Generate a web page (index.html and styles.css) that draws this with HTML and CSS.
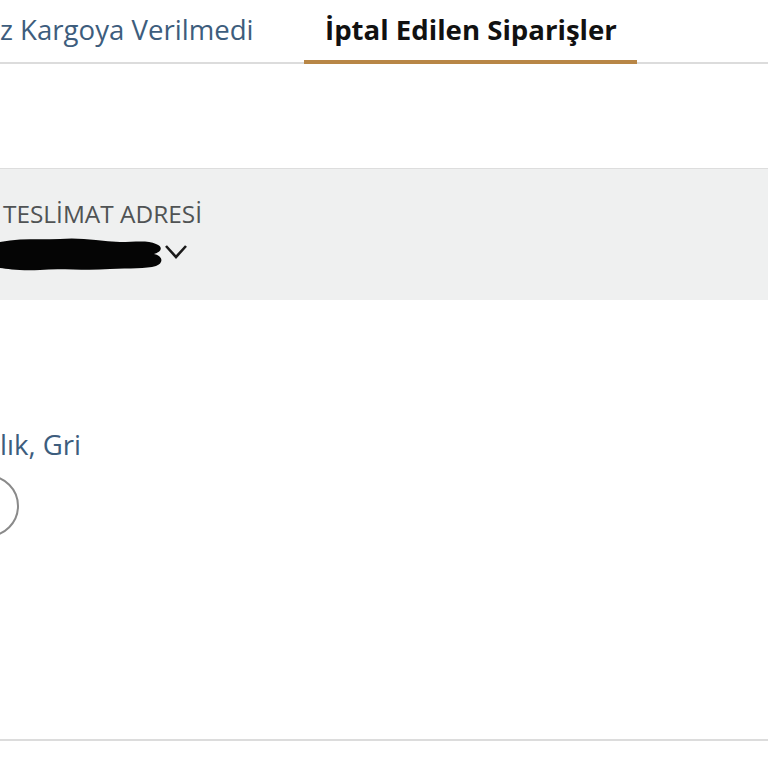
FILE: index.html
```html
<!DOCTYPE html>
<html lang="tr">
<head>
    <meta charset="UTF-8">
    <meta name="viewport" content="width=device-width, initial-scale=1.0">
    <title>Siparişlerim</title>
    <link rel="stylesheet" href="styles.css">
</head>
<body>
    <div class="tabs">
        <div class="tab-first">
            <a class="tab" href="#">z Kargoya Verilmedi</a>
        </div>
        <a class="tab active" href="#">İptal Edilen Siparişler</a>
    </div>

    <div class="order-head">
        <div class="ship-to">
            <span class="label">Teslimat adresi</span>
            <div class="address">
                <svg class="redact" width="164" height="34" viewBox="0 0 164 34">
                    <path d="M0 5 C20 1 40 3 60 2 C80 0 100 4 120 5 C135 5 148 3 156 7 C164 10 161 15 154 17 C163 19 164 26 156 29 C146 32 130 31 110 32 C85 34 60 31 40 33 C20 34 8 32 0 31 Z" fill="#050505"/>
                </svg>
                <svg class="chevron" width="24" height="16" viewBox="0 0 24 16">
                    <polyline points="2,2 12,13 22,2" fill="none" stroke="#1a1a1a" stroke-width="2.6"/>
                </svg>
            </div>
        </div>
    </div>

    <div class="item">
        <a class="item-title" href="#">lık, Gri</a>
        <div class="swatch-row">
            <span class="swatch"></span>
        </div>
    </div>

    <div class="divider"></div>
</body>
</html>
```

FILE: styles.css
```css
body{
    margin: 0;
    padding: 0;
    background: #fff;
    overflow: hidden;
    font-family: "Open Sans", "Noto Sans", sans-serif;
}
a{
    text-decoration: none;
}
.tabs{
    display: flex;
    height: 62px;
    border-bottom: 2px solid #dcdcdc;
}
.tab-first{
    width: 304px;
    flex-shrink: 0;
}
.tab{
    display: block;
    white-space: nowrap;
    font-size: 27.6px;
    line-height: 58px;
    color: #3d5d7d;
}
.tab.active{
    padding: 0 20px 0 21px;
    color: #111;
    font-weight: 700;
    border-bottom: 4px solid #b88646;
    margin-bottom: -2px;
}
.order-head{
    margin-top: 104px;
    border-top: 1px solid #dddddd;
    background: #eff0f0;
    height: 131px;
}
.ship-to{
    padding-top: 30px;
}
.label{
    display: block;
    margin-left: 3px;
    font-size: 24.4px;
    line-height: 30px;
    text-transform: uppercase;
    color: #505354;
}
.address{
    display: flex;
    align-items: flex-start;
    margin-top: 8px;
}
.redact{
    display: block;
}
.chevron{
    display: block;
    margin-top: 7px;
}
.item{
    margin-top: 126px;
}
.item-title{
    display: block;
    white-space: nowrap;
    font-size: 27.6px;
    line-height: 36px;
    color: #3d5d7d;
}
.swatch-row{
    margin-top: 13px;
    margin-left: -43px;
}
.swatch{
    display: block;
    width: 58px;
    height: 58px;
    border: 2px solid #8a8a8a;
    border-radius: 50%;
}
.divider{
    margin-top: 202px;
    height: 2px;
    background: #dcdcdc;
}
```
